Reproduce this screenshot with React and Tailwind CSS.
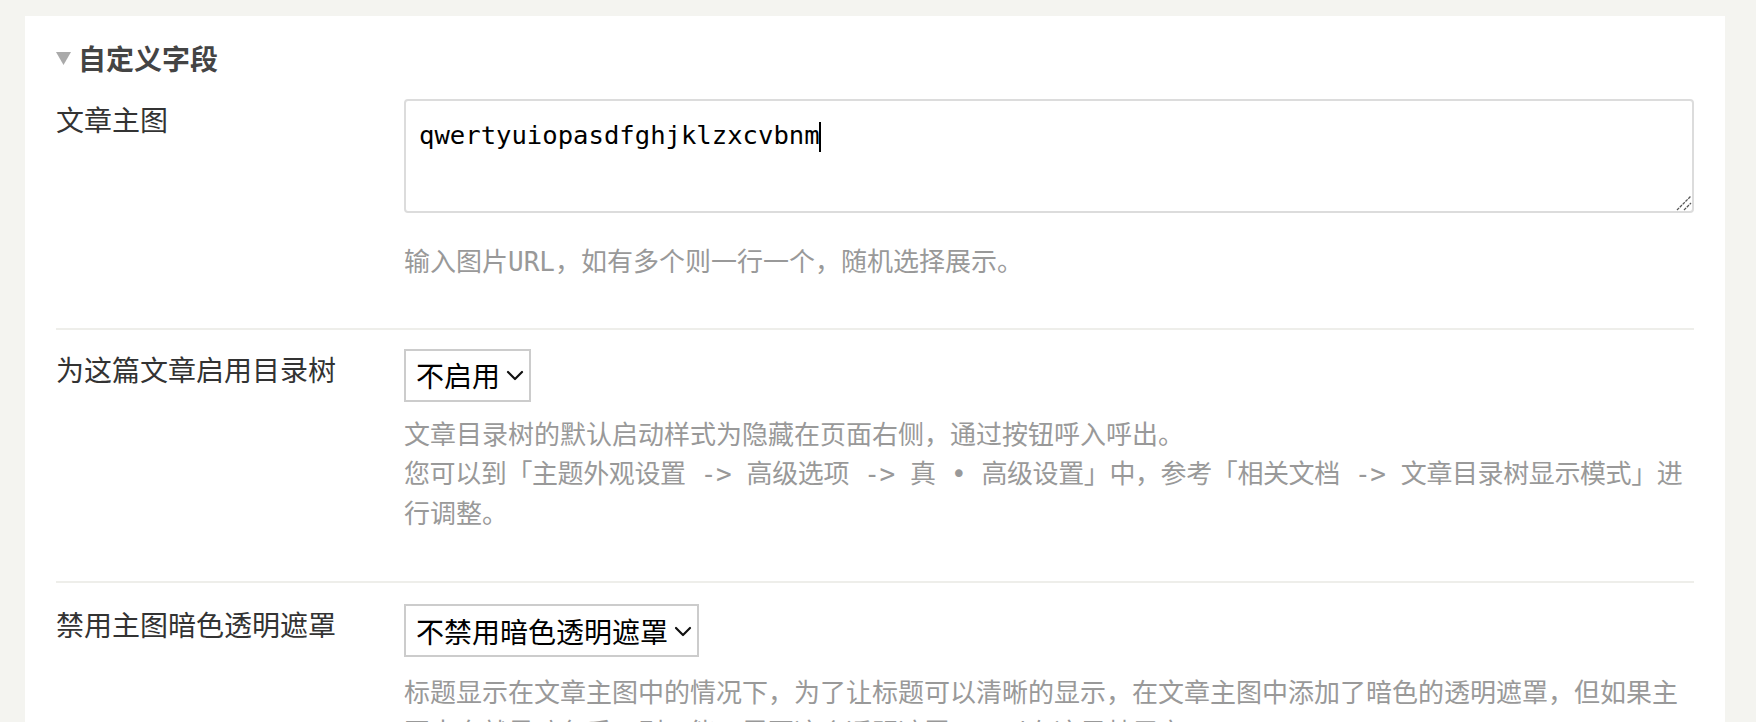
import React from "react";

const cjk = "font-['Noto_Sans_CJK_SC',sans-serif]";
const mono = "font-['DejaVu_Sans_Mono','Noto_Sans_CJK_SC',monospace]";

const FakeSelect = ({ value }) => {
  return (
    <div className="inline-flex items-center h-[53px] border-2 border-[#cccccc] bg-white pl-[10px] pr-[5px] gap-[6px]">
      <span className={`${cjk} text-[28px] leading-[40px] text-black`}>{value}</span>
      <svg width="18" height="12" viewBox="0 0 18 12" fill="none">
        <path d="M2 3 L9 10 L16 3" stroke="#111" strokeWidth="2.2" strokeLinecap="round" strokeLinejoin="round" />
      </svg>
    </div>
  );
};

const HelpText = ({ lines }) => {
  return (
    <div className={`${mono} text-[26px] leading-[39.5px] text-[#999999]`}>
      {lines.map((line, i) => (
        <div key={i} className={`whitespace-nowrap ${line.includes("->") ? "tracking-[-0.4px]" : ""}`}>{line}</div>
      ))}
    </div>
  );
};

const FieldRow = ({ label, children }) => {
  return (
    <div className="flex">
      <div className={`${cjk} w-[348px] shrink-0 text-[28px] leading-[40px] text-[#333333]`}>{label}</div>
      <div className="flex-1 min-w-0">{children}</div>
    </div>
  );
};

export default function App() {
  return (
    <div className="min-h-screen bg-[#f4f4f0] pt-[16px] pl-[25px] pr-[31px]">
      <div className="bg-white px-[31px] pt-[22px] pb-[60px]">
        {/* section header */}
        <div className="flex items-center h-[40px] gap-[7px]">
          <svg width="15" height="14" viewBox="0 0 15 14">
            <polygon points="0,1 15,1 7.5,14" fill="#aaaaaa" />
          </svg>
          <span className={`${cjk} text-[28px] leading-[40px] font-bold text-[#444444]`}>自定义字段</span>
        </div>

        <div className="mt-[21px]">
          <FieldRow label="文章主图">
            <div className={`relative h-[114px] border-2 border-[#dcdcdc] rounded-[4px] px-[13px] pt-[15px] ${mono} text-[25.6px] leading-[38px] text-black`}>
              qwertyuiopasdfghjklzxcvbnm
              <span className="inline-block w-[2px] h-[30px] bg-black align-middle -ml-[1px]" />
              <svg className="absolute right-0 bottom-0" width="16" height="16" viewBox="0 0 16 16">
                <line x1="1" y1="15" x2="15" y2="1" stroke="#555" strokeWidth="1.3" strokeDasharray="3 1" />
                <line x1="8" y1="15" x2="15" y2="8" stroke="#555" strokeWidth="1.3" strokeDasharray="3 1" />
              </svg>
            </div>
            <div className="mt-[30px]">
              <HelpText lines={["输入图片URL，如有多个则一行一个，随机选择展示。"]} />
            </div>
          </FieldRow>
        </div>

        <div className="mt-[45px] h-[2px] bg-[#eeeeea]" />

        <div className="pt-[19px]">
          <FieldRow label="为这篇文章启用目录树">
            <FakeSelect value="不启用" />
            <div className="mt-[14px]">
              <HelpText
                lines={[
                  "文章目录树的默认启动样式为隐藏在页面右侧，通过按钮呼入呼出。",
                  "您可以到「主题外观设置 -> 高级选项 -> 真 • 高级设置」中，参考「相关文档 -> 文章目录树显示模式」进",
                  "行调整。",
                ]}
              />
            </div>
          </FieldRow>
        </div>

        <div className="mt-[47px] h-[2px] bg-[#eeeeea]" />

        <div className="pt-[21px]">
          <FieldRow label="禁用主图暗色透明遮罩">
            <FakeSelect value="不禁用暗色透明遮罩" />
            <div className="mt-[17px]">
              <HelpText
                lines={[
                  "标题显示在文章主图中的情况下，为了让标题可以清晰的显示，在文章主图中添加了暗色的透明遮罩，但如果主",
                  "图本身就是暗色系，则可能不需要这个透明遮罩，可以在这里禁用它。",
                ]}
              />
            </div>
          </FieldRow>
        </div>
      </div>
    </div>
  );
}
